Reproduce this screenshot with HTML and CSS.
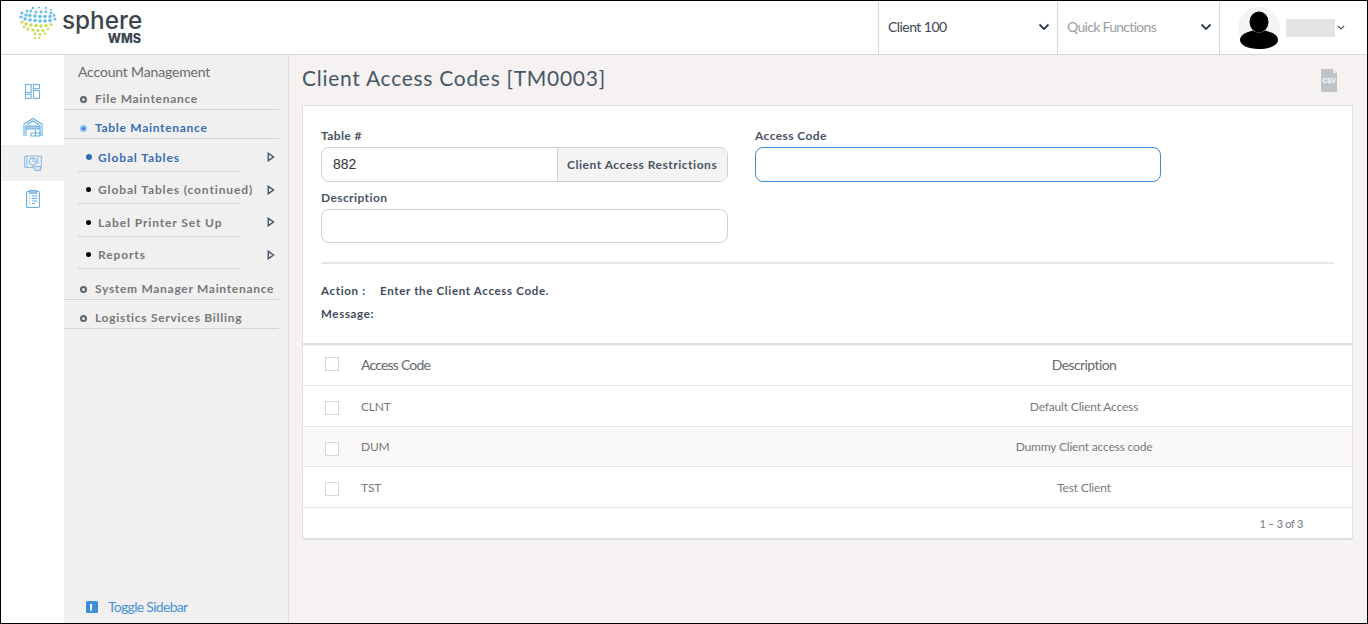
FILE: index.html
```html
<!DOCTYPE html>
<html lang="en">
<head>
<meta charset="utf-8">
<title>Client Access Codes</title>
<link rel="stylesheet" href="styles.css">
</head>
<body>
<div class="frame">
  <header class="topbar">
    <div class="logo">
      <svg class="logo-globe" width="40" height="34" viewBox="0 0 40 34">
        <g fill="#66bfe6">
          <circle cx="15" cy="2" r="1.3"/><circle cx="21" cy="1.5" r="1.1"/><circle cx="28" cy="2" r="1.2"/><circle cx="33" cy="4" r="1.1"/>
          <circle cx="9" cy="5" r="1.4"/><circle cx="13" cy="5" r="1.5"/><circle cx="18" cy="6" r="1.5"/><circle cx="23" cy="6" r="1.5"/><circle cx="28" cy="6" r="1.4"/><circle cx="33" cy="7" r="1.4"/>
          <circle cx="4" cy="7" r="1.5"/><circle cx="8" cy="9" r="1.7"/><circle cx="12" cy="9.5" r="1.7"/><circle cx="17" cy="10" r="1.8"/><circle cx="22" cy="10.5" r="1.8"/><circle cx="27" cy="10.5" r="1.8"/><circle cx="32" cy="10.5" r="1.7"/><circle cx="36" cy="9.5" r="1.4"/>
          <circle cx="3" cy="11" r="1.6"/><circle cx="7" cy="13" r="1.8"/><circle cx="12" cy="14" r="1.8"/><circle cx="17" cy="14.5" r="1.8"/><circle cx="22" cy="15" r="1.8"/><circle cx="27" cy="15" r="1.8"/><circle cx="32" cy="14.5" r="1.8"/><circle cx="37" cy="13" r="1.5"/>
        </g>
        <g fill="#c5db52">
          <circle cx="4" cy="16" r="1.5"/><circle cx="8" cy="18" r="1.7"/><circle cx="13" cy="19" r="1.8"/><circle cx="18" cy="19.5" r="1.8"/><circle cx="23" cy="20" r="1.8"/><circle cx="28" cy="19.5" r="1.7"/><circle cx="33" cy="18.5" r="1.5"/>
          <circle cx="6" cy="21" r="1.3"/><circle cx="10" cy="23" r="1.5"/><circle cx="15" cy="24" r="1.6"/><circle cx="20" cy="24.5" r="1.6"/><circle cx="25" cy="24.5" r="1.5"/><circle cx="30" cy="23" r="1.3"/>
          <circle cx="17" cy="28" r="1.4"/><circle cx="22" cy="28.5" r="1.4"/><circle cx="27" cy="27.5" r="1.2"/><circle cx="17" cy="32" r="1.1"/><circle cx="21" cy="32" r="1.1"/>
        </g>
      </svg>
      <div class="logo-words">
        <span class="logo-name">sphere</span>
        <span class="logo-sub">WMS</span>
      </div>
    </div>
    <div class="top-cell client-cell">
      <span>Client 100</span>
      <svg class="chev" width="12" height="8" viewBox="0 0 12 8"><path d="M1.500 1.500 6 6l4.500-4.500" fill="none" stroke="#2f3b4c" stroke-width="1.800"/></svg>
    </div>
    <div class="top-cell quick-cell">
      <span>Quick Functions</span>
      <svg class="chev" width="12" height="8" viewBox="0 0 12 8"><path d="M1.500 1.500 6 6l4.500-4.500" fill="none" stroke="#2f3b4c" stroke-width="1.800"/></svg>
    </div>
    <div class="user-cell">
      <svg class="avatar" width="42" height="42" viewBox="0 0 42 42">
        <circle cx="21" cy="21" r="21" fill="#f4f4f4"/>
        <ellipse cx="21" cy="15" rx="9.500" ry="10.500" fill="#000"/>
        <path d="M2 33c0-6 8-8 13-9.500 2 2.500 10 2.500 12 0C32 25 40 27 40 33c0 5-8 9-19 9S2 38 2 33z" fill="#000"/>
      </svg>
      <span class="user-name"></span>
      <svg width="8" height="5" viewBox="0 0 8 5"><path d="M.8.8 4 4 7.200.8" fill="none" stroke="#4a5564" stroke-width="1.200"/></svg>
    </div>
  </header>

  <div class="body-row">
    <nav class="rail">
      <div class="rail-item">
        <svg width="15" height="15" viewBox="0 0 16 16" fill="none" stroke="#68ade4" stroke-width="1.100"><rect x=".6" y=".6" width="6" height="8.500"/><rect x="9" y=".6" width="6.400" height="4.400"/><rect x=".6" y="11" width="6" height="4.400"/><rect x="9" y="7" width="6.400" height="8.400"/></svg>
      </div>
      <div class="rail-item">
        <svg width="20" height="20" viewBox="0 0 20 20" fill="none" stroke="#68ade4" stroke-width="1.100"><path d="M1 19V7l9-5.500L19 7v12"/><path d="M4 7.500 10 4l6 3.500"/><path d="M3 9h14v3H3z" fill="#a9d0f0"/><path d="M3 12v7M17 12v7"/><path d="M8 16h9v3H8zM12.500 13v6"/></svg>
      </div>
      <div class="rail-item rail-active">
        <svg width="18" height="16" viewBox="0 0 18 16" fill="none" stroke="#8dbde6" stroke-width="1.100"><rect x=".6" y="1" width="16.800" height="11.500" rx="1"/><path d="M3 1v11.500"/><circle cx="9" cy="6.500" r="3.600"/><path d="M9 6.500V3M9 6.500h3.500"/><path d="M14 1v8"/><path d="M9 11.500h7.500v3.900H11z" fill="#d3e5f4"/></svg>
      </div>
      <div class="rail-item">
        <svg width="14" height="18" viewBox="0 0 14 18" fill="none" stroke="#68ade4" stroke-width="1.100"><rect x=".6" y="1.500" width="12.800" height="16" rx="1"/><rect x="3.500" y=".6" width="7" height="2.600" fill="#a9d0f0"/><path d="M3 6h1M6 6h5.500M3 8.500h1M6 8.500h5.500M3 11h1M6 11h5.500M3 13.500h1M6 13.500h3"/></svg>
      </div>
    </nav>

    <aside class="sidebar">
      <h2 class="side-title">Account Management</h2>
      <ul class="side-list">
        <li class="side-item"><i class="ring"></i>File Maintenance</li>
        <li class="side-item side-current"><i class="ring ring-current"></i>Table Maintenance</li>
        <li class="side-sub side-sub-current"><i class="dot"></i><span>Global Tables</span><svg class="tri" width="8" height="10" viewBox="0 0 8 10"><path d="M1.300 1.300 6.500 5l-5.200 3.700z" fill="none" stroke="#4b5a70" stroke-width="1.500"/></svg></li>
        <li class="side-sub"><i class="dot"></i><span>Global Tables (continued)</span><svg class="tri" width="8" height="10" viewBox="0 0 8 10"><path d="M1.300 1.300 6.500 5l-5.200 3.700z" fill="none" stroke="#4b5a70" stroke-width="1.500"/></svg></li>
        <li class="side-sub"><i class="dot"></i><span>Label Printer Set Up</span><svg class="tri" width="8" height="10" viewBox="0 0 8 10"><path d="M1.300 1.300 6.500 5l-5.200 3.700z" fill="none" stroke="#4b5a70" stroke-width="1.500"/></svg></li>
        <li class="side-sub"><i class="dot"></i><span>Reports</span><svg class="tri" width="8" height="10" viewBox="0 0 8 10"><path d="M1.300 1.300 6.500 5l-5.200 3.700z" fill="none" stroke="#4b5a70" stroke-width="1.500"/></svg></li>
        <li class="side-item side-after"><i class="ring"></i>System Manager Maintenance</li>
        <li class="side-item"><i class="ring"></i>Logistics Services Billing</li>
      </ul>
      <div class="toggle">
        <svg width="12" height="12" viewBox="0 0 12 12"><rect width="12" height="12" rx="1.500" fill="#3b8fdc"/><rect x="4" y="3" width="2" height="6.500" fill="#fff"/></svg>
        <span>Toggle Sidebar</span>
      </div>
    </aside>

    <main class="content">
      <div class="title-row">
        <h1 class="page-title">Client Access Codes [TM0003]</h1>
        <svg class="csv" width="16" height="23" viewBox="0 0 16 23">
          <path d="M0 0h12l4 4v19H0z" fill="#c0c4c9"/>
          <path d="M12 0l4 4h-4z" fill="#eceef0"/>
          <text x="8" y="14" text-anchor="middle" class="csv-text">CSV</text>
        </svg>
      </div>

      <section class="form-card">
        <div class="form-grid">
          <div class="field">
            <label class="label">Table #</label>
            <div class="input-group">
              <span class="input-value">882</span>
              <span class="input-addon">Client Access Restrictions</span>
            </div>
          </div>
          <div class="field">
            <label class="label">Access Code</label>
            <div class="input input-focus"></div>
          </div>
          <div class="field field-desc">
            <label class="label">Description</label>
            <div class="input"></div>
          </div>
        </div>
        <hr class="divider">
        <div class="status-line"><b class="status-key">Action :</b><b>Enter the Client Access Code.</b></div>
        <div class="status-line status-msg"><b class="status-key">Message:</b></div>
      </section>

      <section class="table-card">
        <div class="row row-head"><i class="check"></i><span class="col-code">Access Code</span><span class="col-desc">Description</span></div>
        <div class="row"><i class="check"></i><span>CLNT</span><span class="col-desc">Default Client Access</span></div>
        <div class="row row-alt"><i class="check"></i><span>DUM</span><span class="col-desc">Dummy Client access code</span></div>
        <div class="row"><i class="check"></i><span>TST</span><span class="col-desc">Test Client</span></div>
        <div class="table-foot">1 – 3 of 3</div>
      </section>
    </main>
  </div>
</div>
</body>
</html>
```

FILE: styles.css
```css
* { box-sizing: border-box; }
html, body { margin: 0; padding: 0; height: 100%; }
body { font-family: Lato, "Open Sans", sans-serif; background: #fff; overflow: hidden; }

.frame {
  width: 1368px; height: 624px;
  border: 1px solid #000;
  display: flex; flex-direction: column;
  overflow: hidden;
}

/* top bar */
.topbar {
  height: 54px; flex: none;
  display: flex; align-items: stretch;
  background: #fff;
  border-bottom: 1px solid #d5d8db;
}
.logo { width: 877px; display: flex; padding: 5px 0 0 17px; }
.logo-globe { flex: none; }
.logo-words { display: flex; flex-direction: column; margin-left: 4px; }
.logo-name { font: 500 24.300px/24px Inter, Lato, sans-serif; color: #3a4550; width: 80px; margin-top: 2px; }
.logo-sub { font: 800 12.500px/12px Inter, Lato, sans-serif; color: #3a4550; text-align: right; width: 79px; margin-top: 1px; }
.top-cell {
  display: flex; align-items: center; justify-content: space-between;
  border-left: 1px solid #d5d8db;
  font-size: 14px; letter-spacing: -.55px;
  padding: 0 7px 3px 9px;
}
.client-cell { width: 179px; color: #3c4656; }
.quick-cell { width: 162px; color: #9b9ea3; letter-spacing: -.7px; }
.top-cell .chev { margin-top: 2px; }
.user-cell {
  flex: 1;
  display: flex; align-items: center;
  border-left: 1px solid #d5d8db;
  padding-left: 18px;
}
.user-name { width: 49px; height: 18px; background: #e3e4e6; margin: 0 2px 0 6px; }

/* page body */
.body-row { flex: 1; display: flex; min-height: 0; }

.rail { width: 63px; flex: none; background: #fff; padding-top: 18px; display: flex; flex-direction: column; }
.rail-item { height: 36px; display: flex; align-items: center; justify-content: center; }
.rail-active { background: #f0f0f0; }

.sidebar {
  width: 225px; flex: none;
  background: #f0f0f0;
  border-right: 1px solid #dcdcdc;
  display: flex; flex-direction: column;
}
.side-title { margin: 8px 0 0 14px; font-size: 14px; line-height: 18px; font-weight: 400; letter-spacing: -.17px; color: #6a6a6a; height: 18px; }
.side-list { list-style: none; margin: 0; padding: 0; width: 215px; }
.side-item {
  height: 29px; padding: 8px 0 0 16px;
  display: flex; align-items: center;
  font-size: 12px; line-height: 20px; font-weight: 700; letter-spacing: .7px;
  color: #77777a;
  border-bottom: 1px solid #d0d2d4;
}
.side-current { color: #3a6db5; }
.side-after { margin-top: 2px; }
.ring { width: 7px; height: 7px; border: 2px solid #5a6470; border-radius: 50%; margin-right: 8px; flex: none; background: #f0f0f0; }
.ring-current { border-color: #8fc0f2; background: #2d78d8; }
.side-sub {
  height: 32.500px; padding: 4px 8px 0 22px;
  display: flex; align-items: center;
  font-size: 12px; font-weight: 700; letter-spacing: .88px;
  color: #77777a;
  white-space: nowrap;
  background: linear-gradient(#d5d6d8, #d5d6d8) no-repeat 14px bottom / 163px 1px;
}
.side-sub span { flex: 1; }
.side-sub-current { color: #3a6db5; }
.dot { width: 5px; height: 5px; background: #000; border-radius: 50%; margin-right: 7px; flex: none; }
.side-sub-current .dot { background: #2f6cb0; width: 6px; height: 6px; margin-right: 6px; }
.tri { flex: none; margin-left: -4px; margin-right: -4px; }
.toggle {
  margin-top: auto;
  padding: 0 0 7px 22px;
  display: flex; align-items: center; gap: 10px;
  font-size: 14px; line-height: 18px; letter-spacing: -.7px; color: #4a90d9;
}

/* main */
.content { flex: 1; min-width: 0; background: #f5f2f1; padding: 0 14px 0 13px; }
.title-row { height: 50px; display: flex; justify-content: space-between; align-items: flex-start; }
.page-title { margin: 7px 0 0; font-size: 21px; line-height: 31px; font-weight: 400; letter-spacing: .72px; color: #475666; }
.csv { margin: 14px 16px 0 0; }
.csv-text { font: 700 6.500px "Liberation Sans", sans-serif; fill: #fff; }

.form-card {
  height: 240px;
  background: #fff;
  border: 1px solid #e0e1e3;
  border-bottom: 2px solid #dcdfe2;
  padding: 22px 18px 0;
}
.form-grid { display: grid; grid-template-columns: 407px 406px; column-gap: 27px; }
.field-desc { grid-column: 1; margin-top: 8px; }
.label { display: block; font-size: 12px; line-height: 16px; font-weight: 700; letter-spacing: .4px; color: #4a5464; height: 19px; }
.input-group {
  height: 35px; display: flex;
  border: 1px solid #ccd0d6; border-radius: 8px;
  overflow: hidden;
}
.input-value { flex: 1; padding-left: 11px; font: 14px/33px "Liberation Sans", Arial, sans-serif; color: #333; }
.input-addon {
  width: 170px; flex: none;
  background: #f4f4f5; border-left: 1px solid #ccd0d6;
  font-size: 12px; line-height: 34px; font-weight: 700; letter-spacing: .52px; color: #4a5464;
  padding-left: 9px; white-space: nowrap;
}
.input { height: 34px; border: 1px solid #ccd0d6; border-radius: 8px; }
.input-focus { height: 35px; border-color: #3d8bd4; }

.divider { border: 0; height: 2px; background: #e6e6e6; margin: 19px 0 0; }
.status-line { font-size: 11.500px; line-height: 16px; letter-spacing: .67px; color: #3f4a5c; margin-top: 19px; display: flex; }
.status-msg { margin-top: 7px; }
.status-key { width: 59px; flex: none; }

.table-card {
  background: #fff;
  border: 1px solid #e0e1e3;
  border-top: 0;
  border-bottom: 2px solid #dcdfe2;
  border-radius: 0 0 3px 3px;
  margin-top: 1px;
}
.row {
  display: grid; grid-template-columns: 58px 455px 1fr;
  align-items: center;
  height: 40.500px;
  padding-top: 1px;
  border-bottom: 1.500px solid #e4e4e6;
  font-size: 12px; letter-spacing: -.17px; color: #77797e;
}
.row-head { height: 40px; padding: 0 0 2px; font-size: 14px; color: #66686c; letter-spacing: -.6px; }
.row-head .col-code { letter-spacing: -.8px; }
.row-alt { background: #faf8f8; }
.check { display: block; width: 14px; height: 14px; border: 1px solid #d8d8d8; background: #fff; margin: 4px 0 0 22px; }
.row-head .check { margin: 0 0 2px 22px; }
.col-desc { text-align: center; }
.table-foot { height: 30px; text-align: right; padding-right: 49px; font-size: 11px; line-height: 31px; letter-spacing: -.3px; color: #77797e; }
```
